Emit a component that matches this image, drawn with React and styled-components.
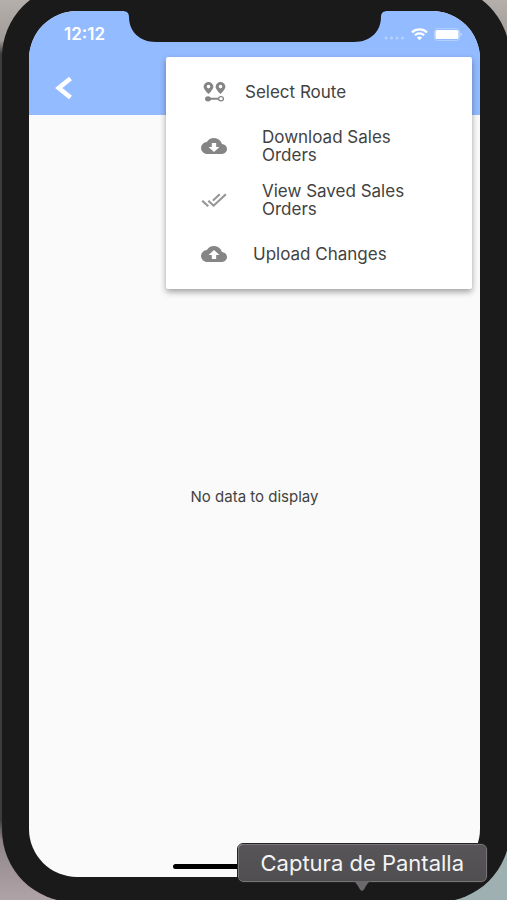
import styled, { createGlobalStyle } from "styled-components";
import { MdCloudDownload, MdCloudUpload, MdDoneAll } from "react-icons/md";

const GlobalStyle = createGlobalStyle`
  * {
    box-sizing: border-box;
  }

  body {
    margin: 0;
    font-family: Inter, "Liberation Sans", sans-serif;
  }
`;

const Page = styled.div`
  position: relative;
  display: flex;
  height: 100vh;
  overflow: hidden;
  background: linear-gradient(
      to right,
      transparent 50%,
      #9fb0b3 50%
    )
    bottom / 100% 70px no-repeat,
    linear-gradient(
      #b5afab 0,
      #a39d99 40px,
      #3c3c3c 54px,
      #3c3c3c 820px,
      #8f8589 840px,
      #b0a3a8 100%
    );
`;

const Phone = styled.div`
  flex: 1;
  display: flex;
  margin: -15px -3px -2px 2px;
  padding: 26px 30px 25px 27px;
  border-radius: 72px;
  background-color: #1a1a1a;
`;

const Screen = styled.main`
  position: relative;
  flex: 1;
  display: flex;
  flex-direction: column;
  border-radius: 48px;
  overflow: hidden;
  background-color: #fafafa;
`;

const StatusBar = styled.div`
  display: grid;
  grid-template-columns: 1fr 266px 1fr;
  height: 31px;
  background-color: #93bbff;
  color: white;
`;

const Time = styled.time`
  min-width: 0;
  padding: 13px 0 0 35px;
  font-size: 17px;
  font-weight: 600;
  line-height: 20px;
  white-space: nowrap;
`;

const Indicators = styled.div`
  display: flex;
  justify-content: flex-end;
  gap: 6px;
  min-width: 0;
  padding: 17px 18px 0 0;

  svg {
    flex-shrink: 0;
  }
`;

const AppBar = styled.header`
  display: flex;
  align-items: flex-end;
  height: 73px;
  padding: 0 22px 15px;
  background-color: #93bbff;
`;

const BackButton = styled.button`
  display: flex;
  padding: 0;
  border: none;
  background: none;
  color: white;
  cursor: pointer;
`;

const Menu = styled.nav`
  position: absolute;
  top: 46px;
  left: 137px;
  right: 8px;
  padding: 8px 0;
  border-radius: 2px;
  background-color: white;
  box-shadow: 0 3px 6px rgba(0, 0, 0, 0.36);
`;

const MenuItem = styled.button`
  display: flex;
  align-items: center;
  gap: ${(props) => props.$gap}px;
  width: 100%;
  height: 54px;
  padding: 0 48px 0 35px;
  border: none;
  background: none;
  color: #424242;
  font-family: inherit;
  font-size: 17px;
  line-height: 18px;
  text-align: left;
  cursor: pointer;

  svg {
    flex-shrink: 0;
    width: 26px;
    height: 24px;
    color: #858585;
  }
`;

const Empty = styled.div`
  flex: 1;
  display: flex;
  align-items: center;
  justify-content: center;
  color: #424242;
  font-size: 15px;
`;

const HomeIndicator = styled.div`
  position: absolute;
  bottom: 8px;
  left: 32%;
  right: 32%;
  height: 5px;
  border-radius: 3px;
  background-color: black;
`;

const Tooltip = styled.div`
  position: absolute;
  right: 20px;
  bottom: 18px;
  padding: 5px 22px;
  border: 1px solid #777578;
  border-radius: 5px;
  outline: 1px solid #222;
  background: linear-gradient(#575558, #504e51);
  color: #f4f4f4;
  font-size: 22px;
  line-height: 26px;
  white-space: nowrap;

  svg {
    position: absolute;
    top: 100%;
    left: 50%;
    margin-left: -11px;
  }
`;

const Notch = () => (
  <svg width="266" height="31" viewBox="0 0 266 31" fill="#1a1a1a">
    <path d="M0 0C5 0 7 2 7 6C7 20 17 31 34 31H232C249 31 259 20 259 6C259 2 261 0 266 0Z" />
  </svg>
);

const SignalDots = () => (
  <svg width="21" height="14" viewBox="0 0 21 14" fill="white" opacity="0.35">
    <circle cx="2" cy="10" r="1.5" />
    <circle cx="7.5" cy="10" r="1.5" />
    <circle cx="13" cy="10" r="1.5" />
    <circle cx="18.5" cy="10" r="1.5" />
  </svg>
);

const Wifi = () => (
  <svg width="17" height="13" viewBox="0 0 17 13" fill="none" stroke="white">
    <path d="M1 4.4C5.2 0.4 11.8 0.4 16 4.4" strokeWidth="2.2" />
    <path d="M3.8 7.2C6.5 4.7 10.5 4.7 13.2 7.2" strokeWidth="2.1" />
    <path d="M8.5 12.2L5.8 9.5C7.3 8 9.7 8 11.2 9.5Z" fill="white" stroke="none" />
  </svg>
);

const Battery = () => (
  <svg width="28" height="13" viewBox="0 0 28 13" fill="white">
    <rect x="0.5" y="0.5" width="25" height="12" rx="3" fill="none" stroke="white" opacity="0.3" />
    <rect x="1.5" y="2" width="23" height="9" rx="1.5" />
    <path d="M26.5 4.5C28 5 28 8 26.5 8.5Z" opacity="0.6" />
  </svg>
);

const BackIcon = () => (
  <svg width="24" height="24" viewBox="0 0 24 24" fill="none" stroke="currentColor" strokeWidth="4.6">
    <path d="M19.5 2.5L7.8 12L19.5 21.5" />
  </svg>
);

const RouteIcon = () => (
  <svg viewBox="0 0 26 24" fill="currentColor">
    <path
      fillRule="evenodd"
      d="M7.5 2a4.9 4.7 0 0 0-4.9 4.7C2.6 9.6 7.5 14 7.5 14S12.4 9.6 12.4 6.7A4.9 4.7 0 0 0 7.5 2ZM7.5 4.8a1.8 1.8 0 1 1 0 3.6a1.8 1.8 0 0 1 0-3.6Z"
    />
    <path
      fillRule="evenodd"
      d="M19.5 2a4.9 4.7 0 0 0-4.9 4.7C14.6 9.6 19.5 14 19.5 14S24.4 9.6 24.4 6.7A4.9 4.7 0 0 0 19.5 2ZM19.5 4.8a1.8 1.8 0 1 1 0 3.6a1.8 1.8 0 0 1 0-3.6Z"
    />
    <ellipse cx="7" cy="18.8" rx="3" ry="2.6" />
    <path d="M8 17.8H17.5V19.8H8Z" />
    <ellipse cx="20" cy="18.8" rx="2.4" ry="2.1" fill="none" stroke="currentColor" strokeWidth="1.3" />
  </svg>
);

const items = [
  { label: "Select Route", icon: <RouteIcon />, gap: 18 },
  {
    label: "Download Sales Orders",
    icon: <MdCloudDownload preserveAspectRatio="none" />,
    gap: 35,
  },
  {
    label: "View Saved Sales Orders",
    icon: <MdDoneAll preserveAspectRatio="none" opacity="0.85" />,
    gap: 35,
  },
  {
    label: "Upload Changes",
    icon: <MdCloudUpload preserveAspectRatio="none" />,
    gap: 26,
  },
];

const App = () => {
  return (
    <Page>
      <GlobalStyle />
      <Phone>
        <Screen>
          <StatusBar>
            <Time>12:12</Time>
            <Notch />
            <Indicators>
              <SignalDots />
              <Wifi />
              <Battery />
            </Indicators>
          </StatusBar>
          <AppBar>
            <BackButton aria-label="Back">
              <BackIcon />
            </BackButton>
          </AppBar>
          <Empty>No data to display</Empty>
          <HomeIndicator />
          <Menu>
            {items.map((item) => (
              <MenuItem key={item.label} $gap={item.gap}>
                {item.icon}
                <span>{item.label}</span>
              </MenuItem>
            ))}
          </Menu>
        </Screen>
      </Phone>
      <Tooltip role="tooltip">
        Captura de Pantalla
        <svg width="22" height="11" viewBox="0 0 22 11">
          <path d="M0 0C4 0 5 2 7 5L9 8.5Q11 11 13 8.5L15 5C17 2 18 0 22 0Z" fill="#6b696c" />
        </svg>
      </Tooltip>
    </Page>
  );
};

export default App;
